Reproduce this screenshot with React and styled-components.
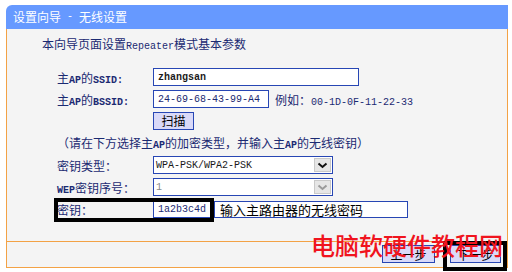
import React from 'react';
import styled, { createGlobalStyle } from 'styled-components';

const Global = createGlobalStyle`
  html, body { margin: 0; padding: 0; background: #fff; }
  body { font-family: "Noto Sans CJK SC", "Noto Sans", sans-serif; }
`;

const NAVY = '#1b2a72';
const BLUE_BORDER = '#2746b4';
const ORANGE = '#f3a245';

const Page = styled.div`
  position: relative;
  width: 512px;
  height: 272px;
  overflow: hidden;
  box-sizing: border-box;
  padding: 5px 0 0 6px;
`;

const Panel = styled.div`
  width: 502px;
  display: flex;
  flex-direction: column;
`;

const Header = styled.div`
  height: 24px;
  background: #6699ff;
  border-top-left-radius: 6px;
  color: #fff;
  font-size: 12px;
  line-height: 24px;
  padding-left: 7px;
  display: flex;
  align-items: center;
  white-space: pre;
`;

const Mono = styled.span`
  font-family: "Liberation Mono", monospace;
  font-size: 10px;
  font-weight: ${p => (p.$bold ? 700 : 400)};
`;

const Body = styled.div`
  height: 213px;
  box-sizing: border-box;
  background: #f4f4f4;
  border-left: 1px solid ${ORANGE};
  border-right: 1px solid ${ORANGE};
  border-bottom: 1px solid ${ORANGE};
  padding-top: 6px;
  display: flex;
  flex-direction: column;
`;

const Title = styled.div`
  height: 18px;
  line-height: 18px;
  padding-left: 35px;
  margin-bottom: 13px;
  font-size: 12px;
  color: ${NAVY};
  white-space: pre;
`;

const Row = styled.div`
  height: ${p => p.$h}px;
  display: flex;
  align-items: center;
  padding-left: 50px;
  font-size: 12px;
  color: ${NAVY};
  white-space: pre;
`;

const Label = styled.div`
  width: 96px;
  flex: none;
  color: ${NAVY};
  font-size: 12px;
`;

const Field = styled.div`
  width: ${p => p.$w}px;
  height: 18px;
  box-sizing: border-box;
  border: 1px solid ${BLUE_BORDER};
  background: #fff;
  display: flex;
  align-items: center;
  padding-left: 4px;
  font-family: "Liberation Mono", monospace;
  font-size: 10px;
  font-weight: ${p => (p.$bold ? 700 : 400)};
  color: ${p => (p.$bold ? '#1a1a1a' : NAVY)};
  flex: none;
`;

const Hint = styled.span`
  margin-left: 6px;
  color: ${NAVY};
  font-size: 12px;
`;

const Button = styled.div`
  width: ${p => p.$w}px;
  height: 18px;
  box-sizing: border-box;
  border: 1px solid ${BLUE_BORDER};
  background: #d9d9f8;
  color: #000;
  font-size: 12px;
  display: flex;
  align-items: center;
  justify-content: center;
  flex: none;
`;

const Note = styled.div`
  color: ${NAVY};
  font-size: 12px;
`;

const Select = styled.div`
  width: 180px;
  height: 18px;
  box-sizing: border-box;
  border: 1px solid ${BLUE_BORDER};
  background: #fff;
  display: flex;
  align-items: center;
  padding-left: 2px;
  font-family: "Liberation Mono", monospace;
  font-size: 10px;
  color: ${p => (p.$disabled ? '#8a8a8a' : '#1a1a1a')};
  flex: none;
`;

const SelectValue = styled.span`
  flex: 1;
`;

const Arrow = styled.div`
  width: 17px;
  height: 14px;
  margin-right: 1px;
  background: #e6e6e6;
  border: 1px solid #c9c9c9;
  box-sizing: border-box;
  display: flex;
  align-items: center;
  justify-content: center;
`;

const KeyInput = styled(Field)`
  width: 60px;
`;

const HintBox = styled.div`
  width: 194px;
  height: 17px;
  box-sizing: border-box;
  margin-left: 1px;
  border: 1px solid ${BLUE_BORDER};
  background: #fff;
  color: #000;
  font-size: 13px;
  line-height: 15px;
  padding-left: 5px;
  flex: none;
`;

const Footer = styled.div`
  height: 26px;
  box-sizing: border-box;
  background: #f4f4f4;
  border-left: 1px solid ${ORANGE};
  border-right: 1px solid ${ORANGE};
  border-bottom: 1px solid ${ORANGE};
  display: flex;
  justify-content: flex-end;
  align-items: flex-start;
  padding: 3px 6px 0 0;
  gap: 15px;
`;

const Highlight = styled.div`
  position: absolute;
  left: ${p => p.$x}px;
  top: ${p => p.$y}px;
  width: ${p => p.$w}px;
  height: ${p => p.$h}px;
  box-sizing: border-box;
  border: ${p => p.$b}px solid #000;
  pointer-events: none;
`;

const Watermark = styled.div`
  position: absolute;
  left: 311px;
  top: 231px;
  line-height: 28px;
  font-size: 24px;
  font-weight: 500;
  color: #f0141e;
  font-family: "Noto Sans CJK SC", sans-serif;
  white-space: nowrap;
`;

const Chevron = ({ color }) => (
  <svg width="11" height="7" viewBox="0 0 11 7">
    <path d="M1.5 1.5 L5.5 5 L9.5 1.5" fill="none" stroke={color} strokeWidth="2" />
  </svg>
);

export default function App() {
  return (
    <>
      <Global />
      <Page>
        <Panel>
          <Header>设置向导<Mono> - </Mono>无线设置</Header>
          <Body>
            <Title>本向导页面设置<Mono>Repeater</Mono>模式基本参数</Title>
            <Row $h={22}>
              <Label>主<Mono $bold>AP</Mono>的<Mono $bold>SSID:</Mono></Label>
              <Field $w={206} $bold>zhangsan</Field>
            </Row>
            <Row $h={22}>
              <Label>主<Mono $bold>AP</Mono>的<Mono $bold>BSSID:</Mono></Label>
              <Field $w={116}>24-69-68-43-99-A4</Field>
              <Hint>例如：<Mono>00-1D-0F-11-22-33</Mono></Hint>
            </Row>
            <Row $h={21}>
              <Label />
              <Button $w={41}>扫描</Button>
            </Row>
            <Row $h={23}>
              <Note>（请在下方选择主<Mono $bold>AP</Mono>的加密类型，并输入主<Mono $bold>AP</Mono>的无线密钥）</Note>
            </Row>
            <Row $h={22}>
              <Label>密钥类型：</Label>
              <Select>
                <SelectValue>WPA-PSK/WPA2-PSK</SelectValue>
                <Arrow><Chevron color="#111" /></Arrow>
              </Select>
            </Row>
            <Row $h={22}>
              <Label><Mono $bold>WEP</Mono>密钥序号：</Label>
              <Select $disabled>
                <SelectValue>1</SelectValue>
                <Arrow><Chevron color="#9a9a9a" /></Arrow>
              </Select>
            </Row>
            <Row $h={22}>
              <Label>密钥：</Label>
              <KeyInput>1a2b3c4d</KeyInput>
              <HintBox>输入主路由器的无线密码</HintBox>
            </Row>
          </Body>
          <Footer>
            <Button $w={53}>上一步</Button>
            <Button $w={51}>下一步</Button>
          </Footer>
        </Panel>
        <Highlight $x={54} $y={198} $w={160} $h={24} $b={4} />
        <Highlight $x={443} $y={241} $w={64} $h={30} $b={4} />
        <Watermark>电脑软硬件教程网</Watermark>
      </Page>
    </>
  );
}
